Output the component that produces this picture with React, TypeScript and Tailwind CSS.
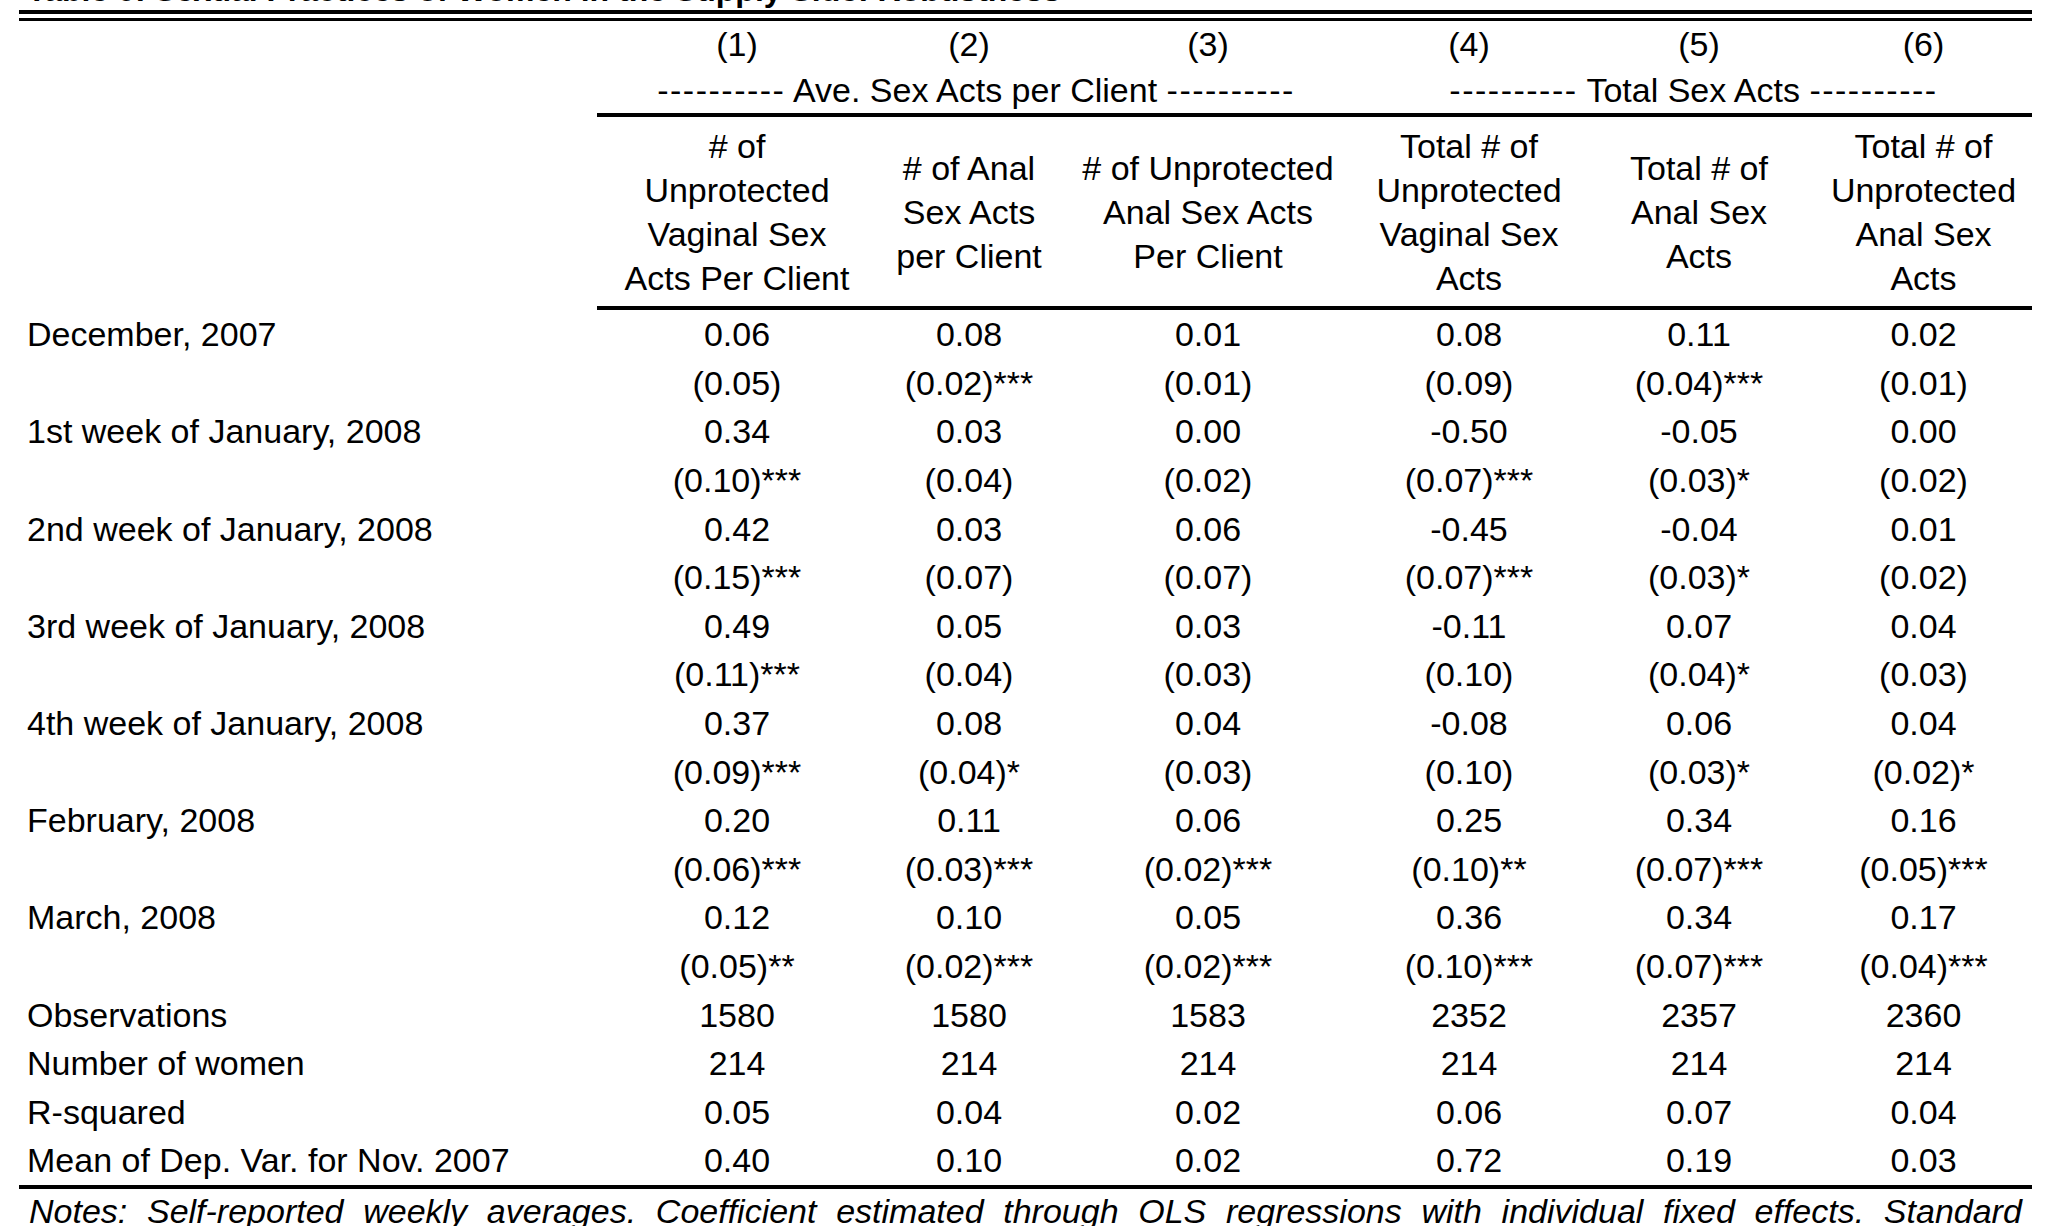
import React from "react";

const W = ["w-[280px]", "w-[184px]", "w-[294px]", "w-[228px]", "w-[232px]", "w-[217px]"];

type Row = { label: string; vals: string[] };

const rows: Row[] = [
  { label: "December, 2007", vals: ["0.06", "0.08", "0.01", "0.08", "0.11", "0.02"] },
  { label: "", vals: ["(0.05)", "(0.02)***", "(0.01)", "(0.09)", "(0.04)***", "(0.01)"] },
  { label: "1st week of January, 2008", vals: ["0.34", "0.03", "0.00", "-0.50", "-0.05", "0.00"] },
  { label: "", vals: ["(0.10)***", "(0.04)", "(0.02)", "(0.07)***", "(0.03)*", "(0.02)"] },
  { label: "2nd week of January, 2008", vals: ["0.42", "0.03", "0.06", "-0.45", "-0.04", "0.01"] },
  { label: "", vals: ["(0.15)***", "(0.07)", "(0.07)", "(0.07)***", "(0.03)*", "(0.02)"] },
  { label: "3rd week of January, 2008", vals: ["0.49", "0.05", "0.03", "-0.11", "0.07", "0.04"] },
  { label: "", vals: ["(0.11)***", "(0.04)", "(0.03)", "(0.10)", "(0.04)*", "(0.03)"] },
  { label: "4th week of January, 2008", vals: ["0.37", "0.08", "0.04", "-0.08", "0.06", "0.04"] },
  { label: "", vals: ["(0.09)***", "(0.04)*", "(0.03)", "(0.10)", "(0.03)*", "(0.02)*"] },
  { label: "February, 2008", vals: ["0.20", "0.11", "0.06", "0.25", "0.34", "0.16"] },
  { label: "", vals: ["(0.06)***", "(0.03)***", "(0.02)***", "(0.10)**", "(0.07)***", "(0.05)***"] },
  { label: "March, 2008", vals: ["0.12", "0.10", "0.05", "0.36", "0.34", "0.17"] },
  { label: "", vals: ["(0.05)**", "(0.02)***", "(0.02)***", "(0.10)***", "(0.07)***", "(0.04)***"] },
  { label: "Observations", vals: ["1580", "1580", "1583", "2352", "2357", "2360"] },
  { label: "Number of women", vals: ["214", "214", "214", "214", "214", "214"] },
  { label: "R-squared", vals: ["0.05", "0.04", "0.02", "0.06", "0.07", "0.04"] },
  { label: "Mean of Dep. Var. for Nov. 2007", vals: ["0.40", "0.10", "0.02", "0.72", "0.19", "0.03"] },
];

const headers: string[][] = [
  ["# of", "Unprotected", "Vaginal Sex", "Acts Per Client"],
  ["# of Anal", "Sex Acts", "per Client"],
  ["# of Unprotected", "Anal Sex Acts", "Per Client"],
  ["Total # of", "Unprotected", "Vaginal Sex", "Acts"],
  ["Total # of", "Anal Sex", "Acts"],
  ["Total # of", "Unprotected", "Anal Sex", "Acts"],
];

function Dashes() {
  return <span className="tracking-[1.5px]">----------</span>;
}

export default function App() {
  return (
    <div className="min-h-screen bg-white text-black font-['Liberation_Sans',Arial,sans-serif] overflow-hidden">
      <div className="ml-[19px] w-[2013px]">
        <div className="h-[38px] -mt-[28px] pl-[8px] text-[32px] leading-[36px] font-bold whitespace-nowrap">
          Table 6: Sexual Practices of Women in the Supply Side: Robustness
        </div>
        <div className="border-t-4 border-black" />
        <div className="h-[4px]" />
        <div className="border-t-[3px] border-black" />

        <div className="flex h-[46px] items-center text-[34px] leading-none">
          <div className="w-[578px]" />
          {W.map((w, i) => (
            <div key={i} className={`${w} text-center`}>
              ({i + 1})
            </div>
          ))}
        </div>
        <div className="flex h-[46px] items-center text-[34px] leading-none whitespace-nowrap">
          <div className="w-[578px]" />
          <div className="w-[758px] text-center">
            <Dashes /> Ave. Sex Acts per Client <Dashes />
          </div>
          <div className="w-[677px] text-center">
            <Dashes /> Total Sex Acts <Dashes />
          </div>
        </div>
        <div className="ml-[578px] border-t-4 border-black" />

        <div className="flex h-[189px] items-center text-[34px] leading-[44px]">
          <div className="w-[578px]" />
          {headers.map((lines, i) => (
            <div key={i} className={`${W[i]} flex flex-col items-center justify-center text-center whitespace-nowrap`}>
              {lines.map((l, j) => (
                <div key={j}>{l}</div>
              ))}
            </div>
          ))}
        </div>
        <div className="ml-[578px] border-t-4 border-black" />

        {rows.map((r, i) => (
          <div key={i} className="flex h-[48.6px] items-center text-[34px] leading-none whitespace-nowrap">
            <div className="w-[578px] pl-[8px]">{r.label}</div>
            {r.vals.map((v, j) => (
              <div key={j} className={`${W[j]} text-center`}>
                {v}
              </div>
            ))}
          </div>
        ))}
        <div className="border-t-4 border-black" />
        <div className="pl-[10px] pr-[10px] pt-[2px] text-[34px] leading-[40px] italic">
          <p className="text-justify [text-align-last:justify] whitespace-nowrap flex justify-between">
            {"Notes: Self-reported weekly averages. Coefficient estimated through OLS regressions with individual fixed effects. Standard"
              .split(" ")
              .map((w, i) => (
                <span key={i}>{w}</span>
              ))}
          </p>
          <p className="text-justify">
            errors clustered at the individual level in parentheses. The omitted category is November, 2007. * significant at 10%;
            ** significant at 5%; *** significant at 1%.
          </p>
        </div>
      </div>
    </div>
  );
}
